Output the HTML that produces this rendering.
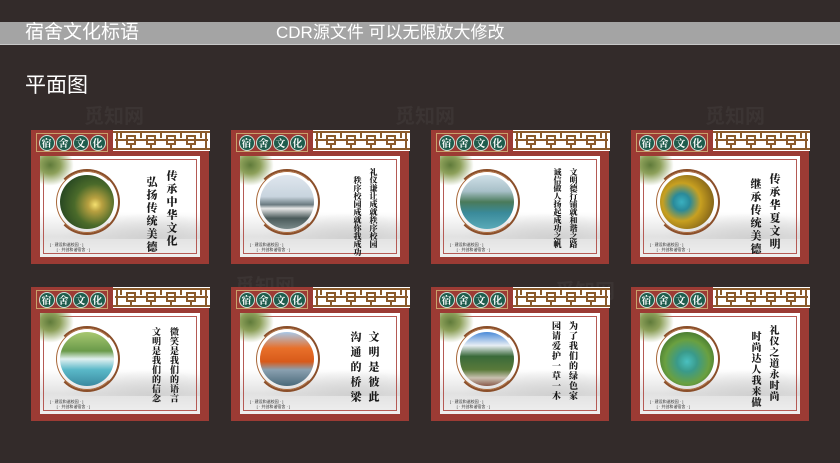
<!DOCTYPE html>
<html><head><meta charset="utf-8"><style>
*{margin:0;padding:0;box-sizing:border-box}
body{width:840px;height:463px;background:#332b2a;position:relative;overflow:hidden;font-family:"Liberation Sans","Noto Sans CJK SC",sans-serif}
.bar{position:absolute;left:0;top:22px;width:840px;height:23px;background:#a4a4a4;border-bottom:1px solid #c8c8c8}
.bar span{position:absolute;top:1px;color:#fff;line-height:20px}
.h2{position:absolute;left:25px;top:74px;color:#fff;font-size:21px;line-height:24px}
.b{position:absolute;width:178px;height:134px;background:#9c3b34}
.tab{position:absolute;left:5px;top:3px;width:72px;height:19px;border:1px solid #c9a26c;background:#9c3b34;display:flex;justify-content:space-around;align-items:center;padding:0 1px}
.tab i{display:block;width:16px;height:16px;border-radius:50%;background:#1f5c4c;border:1px solid #cfe0d6;color:#fff;font-style:normal;font-size:10px;line-height:14px;text-align:center;font-weight:bold;font-family:"Noto Serif CJK SC",serif}
.lat{position:absolute;left:82px;top:0;width:97px;height:21px;background:#fff}
.in{position:absolute;left:9px;top:26px;width:160px;height:101px;background:#fff;overflow:hidden}
.in .fr{position:absolute;left:3px;top:3px;right:3px;bottom:3px;border:1px solid #b55a55}
.mt{position:absolute;left:0;right:0;bottom:0;height:45px;background:linear-gradient(180deg,rgba(255,255,255,0),#e2e2e2 55%,#efefef)}
.mt2{position:absolute;left:20px;bottom:18px;width:150px;height:26px;background:radial-gradient(ellipse at 60% 100%,#d0d0d0,rgba(255,255,255,0) 70%)}
.ring{position:absolute;width:66px;height:66px;border-radius:50%;border:2px solid #8b4f2a;border-left-color:transparent;border-bottom-color:#8b4f2a}
.ring2{position:absolute;width:62px;height:62px;border-radius:50%;border:1.5px solid #a8683a;border-right-color:transparent}
.img{position:absolute;width:54px;height:54px;border-radius:50%}
.leaf{position:absolute;left:0;top:0;width:34px;height:30px;background:radial-gradient(ellipse at 30% 30%,#5f7a3a 0,#8da05a 30%,rgba(255,255,255,0) 70%)}
.col{position:absolute;writing-mode:vertical-rl;font-family:"Noto Serif CJK SC",serif;font-weight:900;color:#1a1a1a}
.lb{position:absolute;font-size:4px;color:#333;white-space:nowrap;line-height:5px}
.wm{position:absolute;color:rgba(255,255,255,0.045);font-size:20px;font-weight:bold}
</style></head><body>
<div class="bar"><span style="left:25px;font-size:19px">宿舍文化标语</span><span style="left:276px;font-size:17px">CDR源文件 可以无限放大修改</span></div>
<div class="h2">平面图</div>
<div class="wm" style="left:84px;top:100px">觅知网</div>
<div class="wm" style="left:395px;top:100px">觅知网</div>
<div class="wm" style="left:705px;top:100px">觅知网</div>
<div class="wm" style="left:235px;top:270px">觅知网</div>
<div class="wm" style="left:555px;top:275px">觅知网</div>

<svg width="0" height="0" style="position:absolute"><defs>
<g id="lt">
<rect x="0" y="0" width="97" height="21" fill="#fff"/>
<path d="M0 2H97M0 19H97M2 10H95M4 2V19M93 2V19" stroke="#8a5a2b" stroke-width="2" fill="none"/>
<path d="M14 6h8v8h-8zM34 6h8v8h-8zM54 6h8v8h-8zM74 6h8v8h-8zM8 2v6M28 2v6M48 2v6M68 2v6M88 2v6M18 14v5M38 14v5M58 14v5M78 14v5" stroke="#8a5a2b" stroke-width="2" fill="none"/>
</g></defs></svg>

<div class="b" style="left:31px;top:130px">
 <div class="tab"><i>宿</i><i>舍</i><i>文</i><i>化</i></div>
 <svg class="lat" viewBox="0 0 97 21"><use href="#lt"/></svg>
 <div class="in"><div class="mt"></div><div class="mt2"></div><div class="fr"></div><div class="leaf"></div>
  <div class="ring" style="left:14px;top:13px"></div><div class="ring2" style="left:16px;top:15px"></div>
  <div class="img" style="left:20px;top:19px;background:radial-gradient(circle at 65% 55%,#f4e070 0,#b8a040 15%,#4a6a2a 45%,#2a4a22 75%,#5a7a5a)"></div>
  <div class="col" style="left:124px;top:14px;font-size:11px;letter-spacing:2px">传承中华文化</div>
  <div class="col" style="left:104px;top:20px;font-size:11px;letter-spacing:2px">弘扬传统美德</div>
  <div class="lb" style="left:10px;top:86px">[ · 建设和谐校园 · ]<br>&nbsp;&nbsp;&nbsp;&nbsp;&nbsp;&nbsp;[ · 共创和谐宿舍 · ]</div>
 </div>
</div>
<div class="b" style="left:231px;top:130px">
 <div class="tab"><i>宿</i><i>舍</i><i>文</i><i>化</i></div>
 <svg class="lat" viewBox="0 0 97 21"><use href="#lt"/></svg>
 <div class="in"><div class="mt"></div><div class="mt2"></div><div class="fr"></div><div class="leaf"></div>
  <div class="ring" style="left:14px;top:13px"></div><div class="ring2" style="left:16px;top:15px"></div>
  <div class="img" style="left:20px;top:19px;background:linear-gradient(180deg,#dfe6ee 0,#c8d4de 40%,#6a7a80 55%,#e8e8e8 62%,#4a5a5a 80%,#7a8a8a)"></div>
  <div class="col" style="left:128px;top:12px;font-size:8px;letter-spacing:0px">礼仪谦让成就秩序校园</div>
  <div class="col" style="left:112px;top:20px;font-size:8px;letter-spacing:0px">秩序校园成就你我成功</div>
  <div class="lb" style="left:10px;top:86px">[ · 建设和谐校园 · ]<br>&nbsp;&nbsp;&nbsp;&nbsp;&nbsp;&nbsp;[ · 共创和谐宿舍 · ]</div>
 </div>
</div>
<div class="b" style="left:431px;top:130px">
 <div class="tab"><i>宿</i><i>舍</i><i>文</i><i>化</i></div>
 <svg class="lat" viewBox="0 0 97 21"><use href="#lt"/></svg>
 <div class="in"><div class="mt"></div><div class="mt2"></div><div class="fr"></div><div class="leaf"></div>
  <div class="ring" style="left:14px;top:13px"></div><div class="ring2" style="left:16px;top:15px"></div>
  <div class="img" style="left:20px;top:19px;background:linear-gradient(180deg,#cfe0e8 0,#a8c0c8 30%,#4a7a5a 50%,#3a8a9a 70%,#5aaab8)"></div>
  <div class="col" style="left:128px;top:12px;font-size:8px;letter-spacing:0px">文明德行铺就和谐之路</div>
  <div class="col" style="left:112px;top:12px;font-size:8px;letter-spacing:0px">诚信做人扬起成功之帆</div>
  <div class="lb" style="left:10px;top:86px">[ · 建设和谐校园 · ]<br>&nbsp;&nbsp;&nbsp;&nbsp;&nbsp;&nbsp;[ · 共创和谐宿舍 · ]</div>
 </div>
</div>
<div class="b" style="left:631px;top:130px">
 <div class="tab"><i>宿</i><i>舍</i><i>文</i><i>化</i></div>
 <svg class="lat" viewBox="0 0 97 21"><use href="#lt"/></svg>
 <div class="in"><div class="mt"></div><div class="mt2"></div><div class="fr"></div><div class="leaf"></div>
  <div class="ring" style="left:14px;top:13px"></div><div class="ring2" style="left:16px;top:15px"></div>
  <div class="img" style="left:20px;top:19px;background:radial-gradient(circle at 40% 50%,#3ab0c0 0,#2a8a9a 20%,#c8a020 45%,#8a6a1a 75%,#3a3a2a)"></div>
  <div class="col" style="left:127px;top:17px;font-size:11px;letter-spacing:2px">传承华夏文明</div>
  <div class="col" style="left:108px;top:22px;font-size:11px;letter-spacing:2px">继承传统美德</div>
  <div class="lb" style="left:10px;top:86px">[ · 建设和谐校园 · ]<br>&nbsp;&nbsp;&nbsp;&nbsp;&nbsp;&nbsp;[ · 共创和谐宿舍 · ]</div>
 </div>
</div>

<div class="b" style="left:31px;top:287px">
 <div class="tab"><i>宿</i><i>舍</i><i>文</i><i>化</i></div>
 <svg class="lat" viewBox="0 0 97 21"><use href="#lt"/></svg>
 <div class="in"><div class="mt"></div><div class="mt2"></div><div class="fr"></div><div class="leaf"></div>
  <div class="ring" style="left:14px;top:13px"></div><div class="ring2" style="left:16px;top:15px"></div>
  <div class="img" style="left:20px;top:19px;background:linear-gradient(180deg,#a8c870 0,#6a9a4a 35%,#e0f0f0 50%,#5ab8c8 70%,#3a8aa0)"></div>
  <div class="col" style="left:128px;top:14px;font-size:9px;letter-spacing:0.5px">微笑是我们的语言</div>
  <div class="col" style="left:110px;top:14px;font-size:9px;letter-spacing:0.5px">文明是我们的信念</div>
  <div class="lb" style="left:10px;top:86px">[ · 建设和谐校园 · ]<br>&nbsp;&nbsp;&nbsp;&nbsp;&nbsp;&nbsp;[ · 共创和谐宿舍 · ]</div>
 </div>
</div>
<div class="b" style="left:231px;top:287px">
 <div class="tab"><i>宿</i><i>舍</i><i>文</i><i>化</i></div>
 <svg class="lat" viewBox="0 0 97 21"><use href="#lt"/></svg>
 <div class="in"><div class="mt"></div><div class="mt2"></div><div class="fr"></div><div class="leaf"></div>
  <div class="ring" style="left:14px;top:13px"></div><div class="ring2" style="left:16px;top:15px"></div>
  <div class="img" style="left:20px;top:19px;background:linear-gradient(180deg,#a8c8e8 0,#e8702a 30%,#d85a1a 55%,#8aa0b0 70%,#4a6a7a)"></div>
  <div class="col" style="left:126px;top:18px;font-size:11px;letter-spacing:4px">文明是彼此</div>
  <div class="col" style="left:108px;top:18px;font-size:11px;letter-spacing:4px">沟通的桥梁</div>
  <div class="lb" style="left:10px;top:86px">[ · 建设和谐校园 · ]<br>&nbsp;&nbsp;&nbsp;&nbsp;&nbsp;&nbsp;[ · 共创和谐宿舍 · ]</div>
 </div>
</div>
<div class="b" style="left:431px;top:287px">
 <div class="tab"><i>宿</i><i>舍</i><i>文</i><i>化</i></div>
 <svg class="lat" viewBox="0 0 97 21"><use href="#lt"/></svg>
 <div class="in"><div class="mt"></div><div class="mt2"></div><div class="fr"></div><div class="leaf"></div>
  <div class="ring" style="left:14px;top:13px"></div><div class="ring2" style="left:16px;top:15px"></div>
  <div class="img" style="left:20px;top:19px;background:linear-gradient(180deg,#4a8ad8 0,#e8eef4 25%,#3a6a3a 45%,#5a7a3a 70%,#c8c0b0 85%,#8a5a4a)"></div>
  <div class="col" style="left:127px;top:8px;font-size:9px;letter-spacing:1px">为了我们的绿色家</div>
  <div class="col" style="left:110px;top:8px;font-size:9px;letter-spacing:1px">园请爱护一草一木</div>
  <div class="lb" style="left:10px;top:86px">[ · 建设和谐校园 · ]<br>&nbsp;&nbsp;&nbsp;&nbsp;&nbsp;&nbsp;[ · 共创和谐宿舍 · ]</div>
 </div>
</div>
<div class="b" style="left:631px;top:287px">
 <div class="tab"><i>宿</i><i>舍</i><i>文</i><i>化</i></div>
 <svg class="lat" viewBox="0 0 97 21"><use href="#lt"/></svg>
 <div class="in"><div class="mt"></div><div class="mt2"></div><div class="fr"></div><div class="leaf"></div>
  <div class="ring" style="left:14px;top:13px"></div><div class="ring2" style="left:16px;top:15px"></div>
  <div class="img" style="left:20px;top:19px;background:radial-gradient(circle at 50% 55%,#4ac0c0 0,#3a9a8a 25%,#6aa040 55%,#3a6a2a 85%)"></div>
  <div class="col" style="left:127px;top:12px;font-size:10px;letter-spacing:1px">礼仪之道永时尚</div>
  <div class="col" style="left:109px;top:18px;font-size:10px;letter-spacing:1px">时尚达人我来做</div>
  <div class="lb" style="left:10px;top:86px">[ · 建设和谐校园 · ]<br>&nbsp;&nbsp;&nbsp;&nbsp;&nbsp;&nbsp;[ · 共创和谐宿舍 · ]</div>
 </div>
</div>
</body></html>
